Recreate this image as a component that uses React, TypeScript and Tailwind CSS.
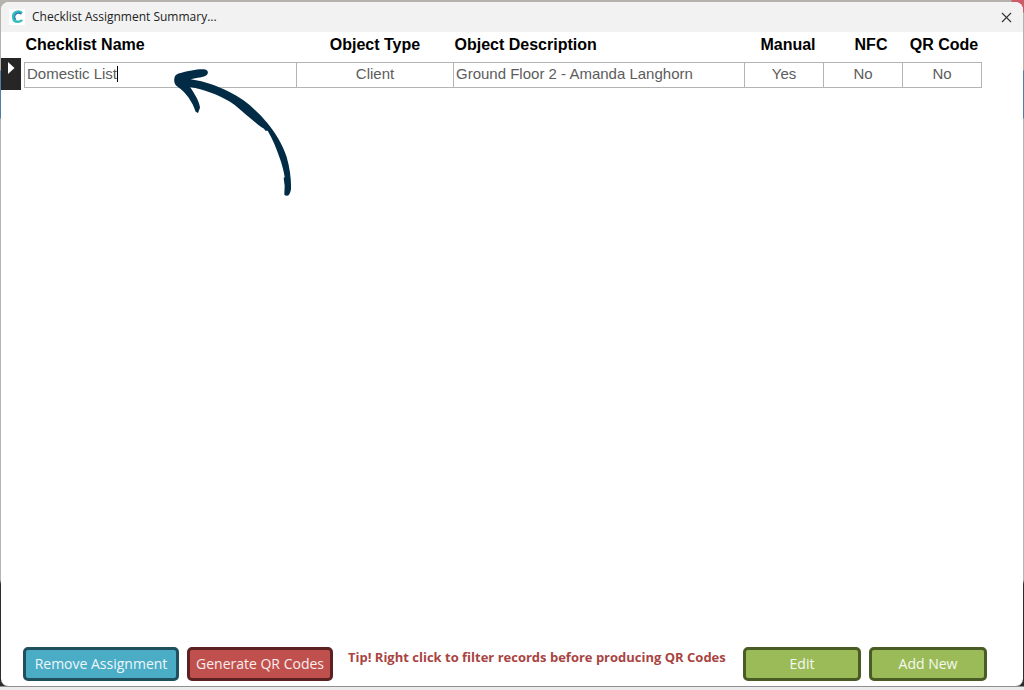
import clsx from "clsx";
import { X } from "lucide-react";

type Column = {
  label: string;
  value: string;
  width: string;
  head: string;
  cell: string;
};

// The description column has no width so it takes whatever room is left.
const COLUMNS: Column[] = [
  { label: "Checklist Name", value: "Domestic List", width: "w-[272px]", head: "text-left pl-px", cell: "text-left" },
  { label: "Object Type", value: "Client", width: "w-[157px]", head: "text-center", cell: "text-center" },
  { label: "Object Description", value: "Ground Floor 2 - Amanda Langhorn", width: "", head: "text-left pl-px", cell: "text-left" },
  { label: "Manual", value: "Yes", width: "w-[79px]", head: "text-center pl-2", cell: "text-center" },
  { label: "NFC", value: "No", width: "w-[79px]", head: "text-center pl-4", cell: "text-center" },
  { label: "QR Code", value: "No", width: "w-[79px]", head: "text-center pl-1", cell: "text-center" },
];

export default function App() {
  return (
    <div className="min-h-screen flex flex-col px-px pt-0.5 pb-[3px] bg-[radial-gradient(circle_at_top_right,#cf5a68_12px,transparent_13px),linear-gradient(to_bottom,#b5b2ae_0,#b5b2ae_70px,#4f7fa8_71px,#4f7fa8_118px,#b4b4b4_119px,#b4b4b4_580px,#2c2c2c_584px,#2c2c2c_686px,#ececec_687px)]">
      <main className="relative flex-1 flex flex-col rounded-lg overflow-hidden bg-white border-b border-[#8f8f8f]">
        <TitleBar />
        <Records />
        <Footer />
        <PointerArrow />
      </main>
    </div>
  );
}

function TitleBar() {
  return (
    <header className="h-[30px] shrink-0 flex items-center px-2 bg-[#f2f2f2]">
      <Logo />
      <h1 className="ml-[7px] font-['Open_Sans',sans-serif] text-[12px] text-[#222]">
        Checklist Assignment Summary...
      </h1>
      <button type="button" aria-label="Close" className="ml-auto text-[#333]">
        <X size={17} strokeWidth={1.6} />
      </button>
    </header>
  );
}

function Logo() {
  return (
    <svg width="16" height="16" viewBox="0 0 16 16" aria-hidden="true">
      <rect width="16" height="16" fill="#fff" />
      <path
        d="M13 4.2C11.7 2.8 10 2.4 8.4 2.7C5.6 3.2 4 5.4 4.2 8.1C4.4 11.1 6.5 12.9 9.2 12.8C10.8 12.7 12.1 12.1 13.1 11"
        fill="none"
        stroke="#35bdb9"
        strokeWidth="2.6"
      />
      <path
        d="M12.4 5.2C10.6 3.8 8.2 3.8 6.8 5.3C5.4 6.8 5.4 9.2 6.8 10.6"
        fill="none"
        stroke="#2d78b4"
        strokeWidth="1.4"
      />
    </svg>
  );
}

function Records() {
  return (
    <section className="flex-1 flex items-start pr-[41px] font-['Liberation_Sans',sans-serif]">
      <button
        type="button"
        aria-label="Select record"
        className="mt-[26px] mr-[3px] h-8 w-5 shrink-0 flex justify-center pt-1 bg-[#262626]"
      >
        <svg width="8" height="12" viewBox="0 0 8 12" aria-hidden="true">
          <path d="M1 0L7.5 6L1 12Z" fill="#fff" />
        </svg>
      </button>
      <table className="flex-1 w-full table-fixed border-collapse">
        <thead>
          <tr className="h-[30px]">
            {COLUMNS.map((col) => (
              <th
                key={col.label}
                scope="col"
                className={clsx("p-0 pb-1 text-[16px] leading-5 font-bold text-black whitespace-nowrap", col.width, col.head)}
              >
                {col.label}
              </th>
            ))}
          </tr>
        </thead>
        <tbody>
          <tr>
            {COLUMNS.map((col, i) => (
              <td key={col.label} className="h-[25px] p-0 border border-[#b4b4b4]">
                <div className="flex items-center px-0.5 pb-0.5 text-[15px] leading-5 text-[#5c5c5c]">
                  <input
                    readOnly
                    aria-label={col.label}
                    value={col.value}
                    className={clsx(
                      "min-w-0 bg-transparent outline-none",
                      i === 0 ? "[field-sizing:content]" : "w-full",
                      col.cell,
                    )}
                  />
                  {/* text cursor of the field being edited */}
                  {i === 0 && <span className="h-4 w-px bg-black" />}
                </div>
              </td>
            ))}
          </tr>
        </tbody>
      </table>
    </section>
  );
}

const BUTTON =
  "h-[34px] shrink-0 rounded-[5px] border-[3px] text-[14px] leading-5 text-white/90";

function Footer() {
  return (
    <footer className="flex items-center pl-[22px] pr-9 pb-[5px] font-['Open_Sans',sans-serif]">
      <button type="button" className={clsx(BUTTON, "w-[156px] bg-[#4bacc6] border-[#20505d]")}>
        Remove Assignment
      </button>
      <button type="button" className={clsx(BUTTON, "ml-2 w-[146px] bg-[#c0504d] border-[#5c2221]")}>
        Generate QR Codes
      </button>
      <p className="ml-[15px] pb-3.5 text-[13px] leading-5 font-bold text-[#a94442] whitespace-nowrap">
        Tip! Right click to filter records before producing QR Codes
      </p>
      <div className="ml-auto flex gap-2">
        <button type="button" className={clsx(BUTTON, "w-[118px] bg-[#9bbb59] border-[#4a5c26]")}>
          Edit
        </button>
        <button type="button" className={clsx(BUTTON, "w-[118px] bg-[#9bbb59] border-[#4a5c26]")}>
          Add New
        </button>
      </div>
    </footer>
  );
}

// Brush-drawn arrow that lies over the grid and points at the checklist name.
function PointerArrow() {
  return (
    <svg
      className="absolute left-[159px] top-[53px] pointer-events-none"
      width="150"
      height="150"
      viewBox="0 0 450 450"
      aria-hidden="true"
    >
      <path
        d="M44 66C46 60 52 56 62 54C84 48 112 42 130 43C143 44 147 52 141 59C132 68 110 67 92 73C136 79 174 94 210 112C252 132 292 168 322 204C344 230 368 268 380 306C390 340 394 375 393 402C392 409 390 415 387 419C384 423 377 423 373 419L374 392L371 370L374 366C371 348 366 328 358 306C350 282 338 252 323 227L316 227L312 221C296 213 280 196 260 181C244 166 228 152 210 140C170 117 132 104 90 96C102 114 118 138 120 158L114 174L107 170C98 142 78 112 54 96C44 90 40 80 44 66Z"
        fill="#022c45"
      />
    </svg>
  );
}
